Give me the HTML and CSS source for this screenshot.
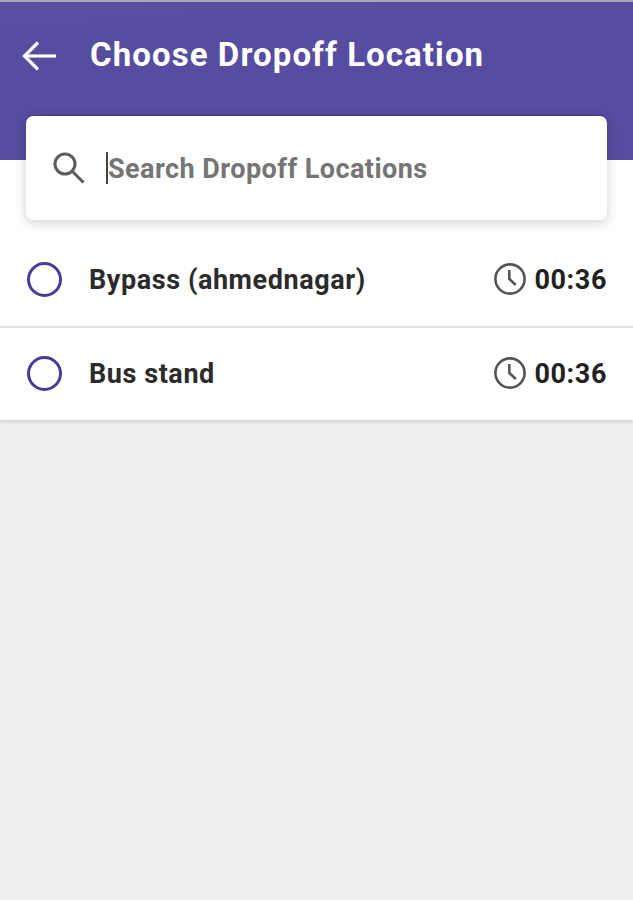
FILE: index.html
```html
<!DOCTYPE html>
<html lang="en">
<head>
    <meta charset="UTF-8">
    <meta name="viewport" content="width=device-width, initial-scale=1.0">
    <title>Choose Dropoff Location</title>
    <link rel="stylesheet" href="styles.css">
</head>
<body>
    <div class="status-strip"></div>
    <div class="header">
        <svg class="back-icon" width="34" height="30" viewBox="0 0 34 30" fill="none" stroke="#fff" stroke-width="3.2">
            <path d="M34 15H2"/>
            <path d="M16 1.5L2.5 15 16 28.5"/>
        </svg>
        <h1 class="title">Choose Dropoff Location</h1>
    </div>

    <div class="content">
        <div class="search-box">
            <svg class="search-icon" width="34" height="34" viewBox="0 0 34 34" fill="none" stroke="#5c5c5c" stroke-width="3">
                <circle cx="13" cy="13" r="10"/>
                <path d="M20.5 20.5l11 11"/>
            </svg>
            <span class="cursor"></span>
            <span class="placeholder">Search Dropoff Locations</span>
        </div>

        <div class="row">
            <span class="radio"></span>
            <span class="name">Bypass (ahmednagar)</span>
            <svg class="clock" width="34" height="34" viewBox="0 0 34 34" fill="none" stroke="#555" stroke-width="2.6">
                <circle cx="17" cy="17" r="14.6"/>
                <path d="M16.3 8v9l6.5 6"/>
            </svg>
            <span class="time">00:36</span>
        </div>
        <div class="row">
            <span class="radio"></span>
            <span class="name">Bus stand</span>
            <svg class="clock" width="34" height="34" viewBox="0 0 34 34" fill="none" stroke="#555" stroke-width="2.6">
                <circle cx="17" cy="17" r="14.6"/>
                <path d="M16.3 8v9l6.5 6"/>
            </svg>
            <span class="time">00:36</span>
        </div>
    </div>
</body>
</html>
```
FILE: styles.css
```css
body {
    margin: 0;
    height: 900px;
    overflow: hidden;
    background-color: #eeeeee;
    font-family: Roboto, "Liberation Sans", sans-serif;
}

.status-strip {
    height: 2px;
    background-color: #a9a7b8;
}

.header {
    display: flex;
    align-items: flex-start;
    height: 158px;
    padding: 0 22px;
    box-sizing: border-box;
    background: linear-gradient(175deg, #5a50a4 0%, #564ca0 22%, #564ca0 100%);
}

.back-icon {
    margin-top: 39px;
}

.title {
    margin: 29px 0 0 34px;
    font-size: 33px;
    line-height: 48px;
    font-weight: 700;
    letter-spacing: 1.08px;
    color: #ffffff;
}

.content {
    background-color: #ffffff;
    box-shadow: 0 2px 3px rgba(0, 0, 0, 0.12);
}

.search-box {
    display: flex;
    align-items: center;
    position: relative;
    top: -44px;
    height: 104px;
    margin: 0 26px -32px 26px;
    padding-left: 26px;
    background-color: #ffffff;
    border-radius: 7px;
    box-shadow: 0 -1px 0 rgba(50, 35, 130, 0.55), 0 3px 12px rgba(0, 0, 0, 0.18);
}

.cursor {
    width: 2px;
    height: 32px;
    margin-left: 20px;
    background-color: #444444;
}

.placeholder {
    padding-top: 2px;
    font-size: 27px;
    font-weight: 700;
    letter-spacing: 0.45px;
    color: #757575;
}

.row {
    display: flex;
    align-items: center;
    height: 94px;
    padding: 0 26px 0 27px;
    box-sizing: border-box;
}

.row + .row {
    padding-bottom: 2px;
    border-top: 2px solid #e2e2e2;
}

.radio {
    width: 35px;
    height: 35px;
    box-sizing: border-box;
    border: 3px solid #4a3a9a;
    border-radius: 50%;
}

.name {
    flex: 1;
    margin-left: 27px;
    padding-top: 1px;
    font-size: 27px;
    font-weight: 700;
    letter-spacing: 0.57px;
    color: #2b2b2b;
}

.clock {
    margin-right: 7px;
}

.time {
    padding-top: 1px;
    font-size: 27px;
    font-weight: 700;
    letter-spacing: 0.6px;
    color: #222222;
}
```
